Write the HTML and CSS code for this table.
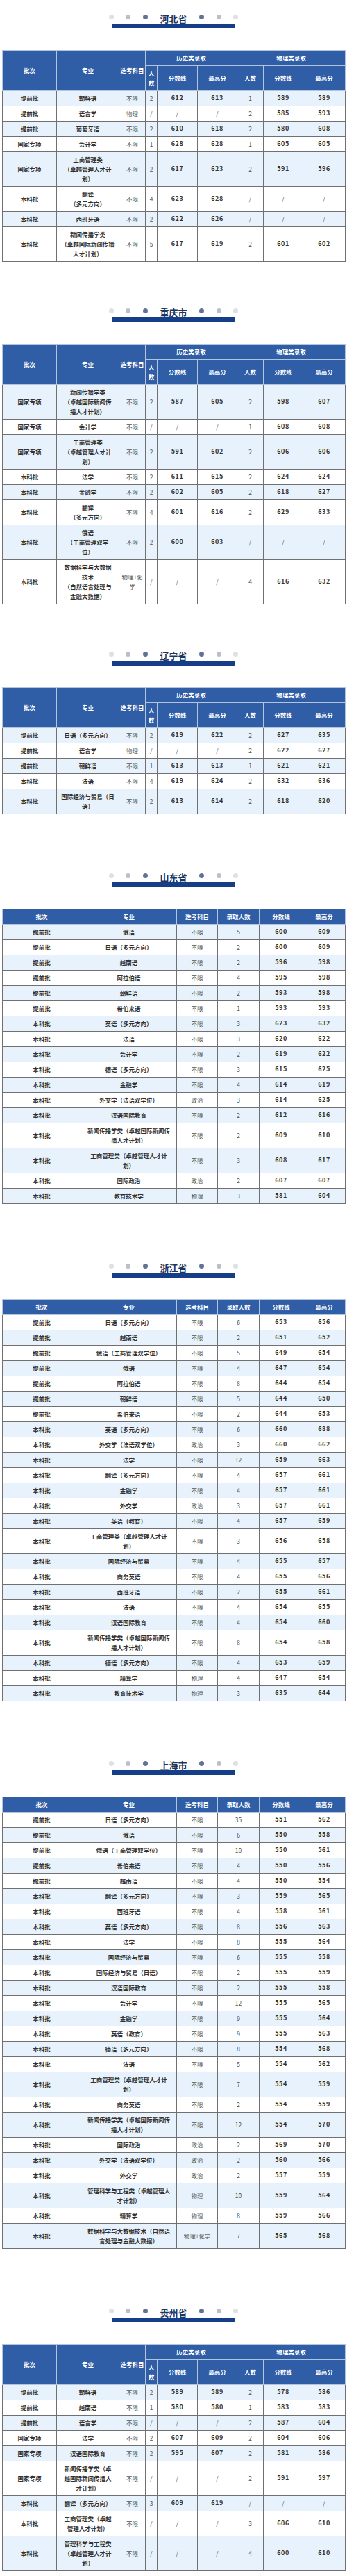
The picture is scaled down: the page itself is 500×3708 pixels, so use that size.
FILE: index.html
```html
<!DOCTYPE html>
<html lang="zh-CN">
<head>
<meta charset="utf-8">
<title>各省录取分数线</title>
<link rel="stylesheet" href="styles.css">
</head>
<body>
<div class="page">

<section class="sec">
  <div class="head">
    <div class="title-row"><span class="dot d1"></span><span class="dot d2"></span><span class="dot d3"></span><span class="title">河北省</span><span class="dot d3"></span><span class="dot d2"></span><span class="dot d1"></span></div>
    <div class="bar"></div>
  </div>
  <table class="t9">
    <colgroup><col class="w78"><col class="w90"><col class="w38"><col class="w17"><col class="w58"><col class="w57"><col class="w38"><col class="w57"><col class="w61"></colgroup>
    <thead>
      <tr><th rowspan="2">批次</th><th rowspan="2">专业</th><th rowspan="2">选考科目</th><th colspan="3">历史类录取</th><th colspan="3">物理类录取</th></tr>
      <tr class="h2"><th>人<br>数</th><th>分数线</th><th>最高分</th><th>人数</th><th>分数线</th><th>最高分</th></tr>
    </thead>
    <tbody class="odd-blue">
      <tr><td class="b">提前批</td><td class="b">朝鲜语</td><td>不限</td><td>2</td><td class="s">612</td><td class="s">613</td><td>1</td><td class="s">589</td><td class="s">589</td></tr>
      <tr><td class="b">提前批</td><td class="b">语言学</td><td>物理</td><td>/</td><td>/</td><td>/</td><td>2</td><td class="s">585</td><td class="s">593</td></tr>
      <tr><td class="b">提前批</td><td class="b">葡萄牙语</td><td>不限</td><td>2</td><td class="s">610</td><td class="s">618</td><td>2</td><td class="s">580</td><td class="s">608</td></tr>
      <tr><td class="b">国家专项</td><td class="b">会计学</td><td>不限</td><td>1</td><td class="s">628</td><td class="s">628</td><td>1</td><td class="s">605</td><td class="s">605</td></tr>
      <tr><td class="b">国家专项</td><td class="b">工商管理类<br>（卓越管理人才计<br>划）</td><td>不限</td><td>2</td><td class="s">617</td><td class="s">623</td><td>2</td><td class="s">591</td><td class="s">596</td></tr>
      <tr><td class="b">本科批</td><td class="b">翻译<br>（多元方向）</td><td>不限</td><td>4</td><td class="s">623</td><td class="s">628</td><td>/</td><td>/</td><td>/</td></tr>
      <tr><td class="b">本科批</td><td class="b">西班牙语</td><td>不限</td><td>2</td><td class="s">622</td><td class="s">626</td><td>/</td><td>/</td><td>/</td></tr>
      <tr><td class="b">本科批</td><td class="b">新闻传播学类<br>（卓越国际新闻传播<br>人才计划）</td><td>不限</td><td>5</td><td class="s">617</td><td class="s">619</td><td>2</td><td class="s">601</td><td class="s">602</td></tr>
    </tbody>
  </table>
</section>

<section class="sec g66">
  <div class="head">
    <div class="title-row"><span class="dot d1"></span><span class="dot d2"></span><span class="dot d3"></span><span class="title">重庆市</span><span class="dot d3"></span><span class="dot d2"></span><span class="dot d1"></span></div>
    <div class="bar"></div>
  </div>
  <table class="t9">
    <colgroup><col class="w78"><col class="w90"><col class="w38"><col class="w17"><col class="w58"><col class="w57"><col class="w38"><col class="w57"><col class="w61"></colgroup>
    <thead>
      <tr><th rowspan="2">批次</th><th rowspan="2">专业</th><th rowspan="2">选考科目</th><th colspan="3">历史类录取</th><th colspan="3">物理类录取</th></tr>
      <tr class="h2"><th>人<br>数</th><th>分数线</th><th>最高分</th><th>人数</th><th>分数线</th><th>最高分</th></tr>
    </thead>
    <tbody class="odd-blue">
      <tr><td class="b">国家专项</td><td class="b">新闻传播学类<br>（卓越国际新闻传<br>播人才计划）</td><td>不限</td><td>2</td><td class="s">587</td><td class="s">605</td><td>2</td><td class="s">598</td><td class="s">607</td></tr>
      <tr><td class="b">国家专项</td><td class="b">会计学</td><td>不限</td><td>/</td><td>/</td><td>/</td><td>1</td><td class="s">608</td><td class="s">608</td></tr>
      <tr><td class="b">国家专项</td><td class="b">工商管理类<br>（卓越管理人才计<br>划）</td><td>不限</td><td>2</td><td class="s">591</td><td class="s">602</td><td>2</td><td class="s">606</td><td class="s">606</td></tr>
      <tr><td class="b">本科批</td><td class="b">法学</td><td>不限</td><td>2</td><td class="s">611</td><td class="s">615</td><td>2</td><td class="s">624</td><td class="s">624</td></tr>
      <tr><td class="b">本科批</td><td class="b">金融学</td><td>不限</td><td>2</td><td class="s">602</td><td class="s">605</td><td>2</td><td class="s">618</td><td class="s">627</td></tr>
      <tr><td class="b">本科批</td><td class="b">翻译<br>（多元方向）</td><td>不限</td><td>4</td><td class="s">601</td><td class="s">616</td><td>2</td><td class="s">629</td><td class="s">633</td></tr>
      <tr><td class="b">本科批</td><td class="b">俄语<br>（工商管理双学<br>位）</td><td>不限</td><td>2</td><td class="s">600</td><td class="s">603</td><td>/</td><td>/</td><td>/</td></tr>
      <tr><td class="b">本科批</td><td class="b">数据科学与大数据<br>技术<br>（自然语言处理与<br>金融大数据）</td><td>物理+化<br>学</td><td>/</td><td>/</td><td>/</td><td>4</td><td class="s">616</td><td class="s">632</td></tr>
    </tbody>
  </table>
</section>

<section class="sec g67">
  <div class="head">
    <div class="title-row"><span class="dot d1"></span><span class="dot d2"></span><span class="dot d3"></span><span class="title">辽宁省</span><span class="dot d3"></span><span class="dot d2"></span><span class="dot d1"></span></div>
    <div class="bar"></div>
  </div>
  <table class="t9">
    <colgroup><col class="w78"><col class="w90"><col class="w38"><col class="w17"><col class="w58"><col class="w57"><col class="w38"><col class="w57"><col class="w61"></colgroup>
    <thead>
      <tr><th rowspan="2">批次</th><th rowspan="2">专业</th><th rowspan="2">选考科目</th><th colspan="3">历史类录取</th><th colspan="3">物理类录取</th></tr>
      <tr class="h2"><th>人<br>数</th><th>分数线</th><th>最高分</th><th>人数</th><th>分数线</th><th>最高分</th></tr>
    </thead>
    <tbody class="odd-blue">
      <tr><td class="b">提前批</td><td class="b">日语（多元方向）</td><td>不限</td><td>2</td><td class="s">619</td><td class="s">622</td><td>2</td><td class="s">627</td><td class="s">635</td></tr>
      <tr><td class="b">提前批</td><td class="b">语言学</td><td>物理</td><td>/</td><td>/</td><td>/</td><td>2</td><td class="s">622</td><td class="s">627</td></tr>
      <tr><td class="b">提前批</td><td class="b">朝鲜语</td><td>不限</td><td>1</td><td class="s">613</td><td class="s">613</td><td>1</td><td class="s">621</td><td class="s">621</td></tr>
      <tr><td class="b">本科批</td><td class="b">法语</td><td>不限</td><td>4</td><td class="s">619</td><td class="s">624</td><td>2</td><td class="s">632</td><td class="s">636</td></tr>
      <tr><td class="b">本科批</td><td class="b">国际经济与贸易（日<br>语）</td><td>不限</td><td>2</td><td class="s">613</td><td class="s">614</td><td>2</td><td class="s">618</td><td class="s">620</td></tr>
    </tbody>
  </table>
</section>

<section class="sec g84">
  <div class="head">
    <div class="title-row"><span class="dot d1"></span><span class="dot d2"></span><span class="dot d3"></span><span class="title">山东省</span><span class="dot d3"></span><span class="dot d2"></span><span class="dot d1"></span></div>
    <div class="bar"></div>
  </div>
  <table class="t6">
    <colgroup><col class="w113"><col class="w138"><col class="w59"><col class="w60"><col class="w63"><col class="w61"></colgroup>
    <thead>
      <tr><th>批次</th><th>专业</th><th>选考科目</th><th>录取人数</th><th>分数线</th><th>最高分</th></tr>
    </thead>
    <tbody class="odd-blue">
      <tr><td class="b">提前批</td><td class="b">俄语</td><td>不限</td><td>5</td><td class="s">600</td><td class="s">609</td></tr>
      <tr><td class="b">提前批</td><td class="b">日语（多元方向）</td><td>不限</td><td>2</td><td class="s">600</td><td class="s">609</td></tr>
      <tr><td class="b">提前批</td><td class="b">越南语</td><td>不限</td><td>2</td><td class="s">596</td><td class="s">598</td></tr>
      <tr><td class="b">提前批</td><td class="b">阿拉伯语</td><td>不限</td><td>4</td><td class="s">595</td><td class="s">598</td></tr>
      <tr><td class="b">提前批</td><td class="b">朝鲜语</td><td>不限</td><td>2</td><td class="s">593</td><td class="s">598</td></tr>
      <tr><td class="b">提前批</td><td class="b">希伯来语</td><td>不限</td><td>1</td><td class="s">593</td><td class="s">593</td></tr>
      <tr><td class="b">本科批</td><td class="b">英语（多元方向）</td><td>不限</td><td>3</td><td class="s">623</td><td class="s">632</td></tr>
      <tr><td class="b">本科批</td><td class="b">法语</td><td>不限</td><td>3</td><td class="s">620</td><td class="s">622</td></tr>
      <tr><td class="b">本科批</td><td class="b">会计学</td><td>不限</td><td>2</td><td class="s">619</td><td class="s">622</td></tr>
      <tr><td class="b">本科批</td><td class="b">德语（多元方向）</td><td>不限</td><td>3</td><td class="s">615</td><td class="s">625</td></tr>
      <tr><td class="b">本科批</td><td class="b">金融学</td><td>不限</td><td>4</td><td class="s">614</td><td class="s">619</td></tr>
      <tr><td class="b">本科批</td><td class="b">外交学（法语双学位）</td><td>政治</td><td>3</td><td class="s">614</td><td class="s">625</td></tr>
      <tr><td class="b">本科批</td><td class="b">汉语国际教育</td><td>不限</td><td>2</td><td class="s">612</td><td class="s">616</td></tr>
      <tr><td class="b">本科批</td><td class="b">新闻传播学类（卓越国际新闻传<br>播人才计划）</td><td>不限</td><td>2</td><td class="s">609</td><td class="s">610</td></tr>
      <tr><td class="b">本科批</td><td class="b">工商管理类（卓越管理人才计<br>划）</td><td>不限</td><td>3</td><td class="s">608</td><td class="s">617</td></tr>
      <tr><td class="b">本科批</td><td class="b">国际政治</td><td>政治</td><td>2</td><td class="s">607</td><td class="s">607</td></tr>
      <tr><td class="b">本科批</td><td class="b">教育技术学</td><td>物理</td><td>3</td><td class="s">581</td><td class="s">604</td></tr>
    </tbody>
  </table>
</section>

<section class="sec g85">
  <div class="head">
    <div class="title-row"><span class="dot d1"></span><span class="dot d2"></span><span class="dot d3"></span><span class="title">浙江省</span><span class="dot d3"></span><span class="dot d2"></span><span class="dot d1"></span></div>
    <div class="bar"></div>
  </div>
  <table class="t6">
    <colgroup><col class="w113"><col class="w138"><col class="w59"><col class="w60"><col class="w63"><col class="w61"></colgroup>
    <thead>
      <tr><th>批次</th><th>专业</th><th>选考科目</th><th>录取人数</th><th>分数线</th><th>最高分</th></tr>
    </thead>
    <tbody class="even-blue">
      <tr><td class="b">提前批</td><td class="b">日语（多元方向）</td><td>不限</td><td>6</td><td class="s">653</td><td class="s">656</td></tr>
      <tr><td class="b">提前批</td><td class="b">越南语</td><td>不限</td><td>2</td><td class="s">651</td><td class="s">652</td></tr>
      <tr><td class="b">提前批</td><td class="b">俄语（工商管理双学位）</td><td>不限</td><td>5</td><td class="s">649</td><td class="s">654</td></tr>
      <tr><td class="b">提前批</td><td class="b">俄语</td><td>不限</td><td>4</td><td class="s">647</td><td class="s">654</td></tr>
      <tr><td class="b">提前批</td><td class="b">阿拉伯语</td><td>不限</td><td>8</td><td class="s">644</td><td class="s">654</td></tr>
      <tr><td class="b">提前批</td><td class="b">朝鲜语</td><td>不限</td><td>5</td><td class="s">644</td><td class="s">650</td></tr>
      <tr><td class="b">提前批</td><td class="b">希伯来语</td><td>不限</td><td>2</td><td class="s">644</td><td class="s">653</td></tr>
      <tr><td class="b">本科批</td><td class="b">英语（多元方向）</td><td>不限</td><td>6</td><td class="s">660</td><td class="s">688</td></tr>
      <tr><td class="b">本科批</td><td class="b">外交学（法语双学位）</td><td>政治</td><td>3</td><td class="s">660</td><td class="s">662</td></tr>
      <tr><td class="b">本科批</td><td class="b">法学</td><td>不限</td><td>12</td><td class="s">659</td><td class="s">663</td></tr>
      <tr><td class="b">本科批</td><td class="b">翻译（多元方向）</td><td>不限</td><td>4</td><td class="s">657</td><td class="s">661</td></tr>
      <tr><td class="b">本科批</td><td class="b">金融学</td><td>不限</td><td>4</td><td class="s">657</td><td class="s">661</td></tr>
      <tr><td class="b">本科批</td><td class="b">外交学</td><td>政治</td><td>3</td><td class="s">657</td><td class="s">661</td></tr>
      <tr><td class="b">本科批</td><td class="b">英语（教育）</td><td>不限</td><td>4</td><td class="s">657</td><td class="s">659</td></tr>
      <tr><td class="b">本科批</td><td class="b">工商管理类（卓越管理人才计<br>划）</td><td>不限</td><td>3</td><td class="s">656</td><td class="s">658</td></tr>
      <tr><td class="b">本科批</td><td class="b">国际经济与贸易</td><td>不限</td><td>4</td><td class="s">655</td><td class="s">657</td></tr>
      <tr><td class="b">本科批</td><td class="b">商务英语</td><td>不限</td><td>4</td><td class="s">655</td><td class="s">656</td></tr>
      <tr><td class="b">本科批</td><td class="b">西班牙语</td><td>不限</td><td>2</td><td class="s">655</td><td class="s">661</td></tr>
      <tr><td class="b">本科批</td><td class="b">法语</td><td>不限</td><td>4</td><td class="s">654</td><td class="s">655</td></tr>
      <tr><td class="b">本科批</td><td class="b">汉语国际教育</td><td>不限</td><td>4</td><td class="s">654</td><td class="s">660</td></tr>
      <tr><td class="b">本科批</td><td class="b">新闻传播学类（卓越国际新闻传<br>播人才计划）</td><td>不限</td><td>8</td><td class="s">654</td><td class="s">658</td></tr>
      <tr><td class="b">本科批</td><td class="b">德语（多元方向）</td><td>不限</td><td>4</td><td class="s">653</td><td class="s">659</td></tr>
      <tr><td class="b">本科批</td><td class="b">精算学</td><td>物理</td><td>4</td><td class="s">647</td><td class="s">654</td></tr>
      <tr><td class="b">本科批</td><td class="b">教育技术学</td><td>物理</td><td>3</td><td class="s">635</td><td class="s">644</td></tr>
    </tbody>
  </table>
</section>

<section class="sec g85">
  <div class="head">
    <div class="title-row"><span class="dot d1"></span><span class="dot d2"></span><span class="dot d3"></span><span class="title">上海市</span><span class="dot d3"></span><span class="dot d2"></span><span class="dot d1"></span></div>
    <div class="bar"></div>
  </div>
  <table class="t6">
    <colgroup><col class="w113"><col class="w138"><col class="w59"><col class="w60"><col class="w63"><col class="w61"></colgroup>
    <thead>
      <tr><th>批次</th><th>专业</th><th>选考科目</th><th>录取人数</th><th>分数线</th><th>最高分</th></tr>
    </thead>
    <tbody class="even-blue">
      <tr><td class="b">提前批</td><td class="b">日语（多元方向）</td><td>不限</td><td>35</td><td class="s">551</td><td class="s">562</td></tr>
      <tr><td class="b">提前批</td><td class="b">俄语</td><td>不限</td><td>6</td><td class="s">550</td><td class="s">558</td></tr>
      <tr><td class="b">提前批</td><td class="b">俄语（工商管理双学位）</td><td>不限</td><td>10</td><td class="s">550</td><td class="s">561</td></tr>
      <tr><td class="b">提前批</td><td class="b">希伯来语</td><td>不限</td><td>4</td><td class="s">550</td><td class="s">556</td></tr>
      <tr><td class="b">提前批</td><td class="b">越南语</td><td>不限</td><td>4</td><td class="s">550</td><td class="s">554</td></tr>
      <tr><td class="b">本科批</td><td class="b">翻译（多元方向）</td><td>不限</td><td>3</td><td class="s">559</td><td class="s">565</td></tr>
      <tr><td class="b">本科批</td><td class="b">西班牙语</td><td>不限</td><td>4</td><td class="s">558</td><td class="s">561</td></tr>
      <tr><td class="b">本科批</td><td class="b">英语（多元方向）</td><td>不限</td><td>8</td><td class="s">556</td><td class="s">563</td></tr>
      <tr><td class="b">本科批</td><td class="b">法学</td><td>不限</td><td>8</td><td class="s">555</td><td class="s">564</td></tr>
      <tr><td class="b">本科批</td><td class="b">国际经济与贸易</td><td>不限</td><td>6</td><td class="s">555</td><td class="s">558</td></tr>
      <tr><td class="b">本科批</td><td class="b">国际经济与贸易（日语）</td><td>不限</td><td>2</td><td class="s">555</td><td class="s">559</td></tr>
      <tr><td class="b">本科批</td><td class="b">汉语国际教育</td><td>不限</td><td>2</td><td class="s">555</td><td class="s">558</td></tr>
      <tr><td class="b">本科批</td><td class="b">会计学</td><td>不限</td><td>12</td><td class="s">555</td><td class="s">565</td></tr>
      <tr><td class="b">本科批</td><td class="b">金融学</td><td>不限</td><td>9</td><td class="s">555</td><td class="s">564</td></tr>
      <tr><td class="b">本科批</td><td class="b">英语（教育）</td><td>不限</td><td>9</td><td class="s">555</td><td class="s">563</td></tr>
      <tr><td class="b">本科批</td><td class="b">德语（多元方向）</td><td>不限</td><td>8</td><td class="s">554</td><td class="s">568</td></tr>
      <tr><td class="b">本科批</td><td class="b">法语</td><td>不限</td><td>5</td><td class="s">554</td><td class="s">562</td></tr>
      <tr><td class="b">本科批</td><td class="b">工商管理类（卓越管理人才计<br>划）</td><td>不限</td><td>7</td><td class="s">554</td><td class="s">559</td></tr>
      <tr><td class="b">本科批</td><td class="b">商务英语</td><td>不限</td><td>2</td><td class="s">554</td><td class="s">559</td></tr>
      <tr><td class="b">本科批</td><td class="b">新闻传播学类（卓越国际新闻传<br>播人才计划）</td><td>不限</td><td>12</td><td class="s">554</td><td class="s">570</td></tr>
      <tr><td class="b">本科批</td><td class="b">国际政治</td><td>政治</td><td>2</td><td class="s">569</td><td class="s">570</td></tr>
      <tr><td class="b">本科批</td><td class="b">外交学（法语双学位）</td><td>政治</td><td>2</td><td class="s">560</td><td class="s">566</td></tr>
      <tr><td class="b">本科批</td><td class="b">外交学</td><td>政治</td><td>2</td><td class="s">557</td><td class="s">559</td></tr>
      <tr><td class="b">本科批</td><td class="b">管理科学与工程类（卓越管理人<br>才计划）</td><td>物理</td><td>10</td><td class="s">559</td><td class="s">564</td></tr>
      <tr><td class="b">本科批</td><td class="b">精算学</td><td>物理</td><td>8</td><td class="s">559</td><td class="s">566</td></tr>
      <tr><td class="b">本科批</td><td class="b">数据科学与大数据技术（自然语<br>言处理与金融大数据）</td><td>物理+化学</td><td>7</td><td class="s">565</td><td class="s">568</td></tr>
    </tbody>
  </table>
</section>

<section class="sec g85">
  <div class="head">
    <div class="title-row"><span class="dot d1"></span><span class="dot d2"></span><span class="dot d3"></span><span class="title">贵州省</span><span class="dot d3"></span><span class="dot d2"></span><span class="dot d1"></span></div>
    <div class="bar"></div>
  </div>
  <table class="t9">
    <colgroup><col class="w78"><col class="w90"><col class="w38"><col class="w17"><col class="w58"><col class="w57"><col class="w38"><col class="w57"><col class="w61"></colgroup>
    <thead>
      <tr><th rowspan="2">批次</th><th rowspan="2">专业</th><th rowspan="2">选考科目</th><th colspan="3">历史类录取</th><th colspan="3">物理类录取</th></tr>
      <tr class="h2"><th>人<br>数</th><th>分数线</th><th>最高分</th><th>人数</th><th>分数线</th><th>最高分</th></tr>
    </thead>
    <tbody class="odd-blue">
      <tr><td class="b">提前批</td><td class="b">朝鲜语</td><td>不限</td><td>2</td><td class="s">589</td><td class="s">589</td><td>2</td><td class="s">578</td><td class="s">586</td></tr>
      <tr><td class="b">提前批</td><td class="b">越南语</td><td>不限</td><td>1</td><td class="s">580</td><td class="s">580</td><td>1</td><td class="s">583</td><td class="s">583</td></tr>
      <tr><td class="b">提前批</td><td class="b">语言学</td><td>不限</td><td>/</td><td>/</td><td>/</td><td>2</td><td class="s">587</td><td class="s">604</td></tr>
      <tr><td class="b">国家专项</td><td class="b">法学</td><td>不限</td><td>2</td><td class="s">607</td><td class="s">609</td><td>2</td><td class="s">604</td><td class="s">606</td></tr>
      <tr><td class="b">国家专项</td><td class="b">汉语国际教育</td><td>不限</td><td>2</td><td class="s">595</td><td class="s">607</td><td>2</td><td class="s">581</td><td class="s">586</td></tr>
      <tr><td class="b">国家专项</td><td class="b">新闻传播学类（卓<br>越国际新闻传播人<br>才计划）</td><td>不限</td><td>/</td><td>/</td><td>/</td><td>2</td><td class="s">591</td><td class="s">597</td></tr>
      <tr><td class="b">本科批</td><td class="b">翻译（多元方向）</td><td>不限</td><td>3</td><td class="s">609</td><td class="s">619</td><td>/</td><td>/</td><td>/</td></tr>
      <tr><td class="b">本科批</td><td class="b">工商管理类（卓越<br>管理人才计划）</td><td>不限</td><td>/</td><td>/</td><td>/</td><td>3</td><td class="s">606</td><td class="s">610</td></tr>
      <tr><td class="b">本科批</td><td class="b">管理科学与工程类<br>（卓越管理人才计<br>划）</td><td>不限</td><td>/</td><td>/</td><td>/</td><td>4</td><td class="s">600</td><td class="s">610</td></tr>
    </tbody>
  </table>
</section>

</div>
</body>
</html>
```

FILE: styles.css
```css
html, body {
  margin: 0;
  padding: 0;
  background: #ffffff;
}

body {
  width: 500px;
  font-family: "Noto Sans CJK SC", "Noto Sans", sans-serif;
  color: #333333;
}

.page {
  padding: 20px 3px 6px;
}

.g66 { margin-top: 66px; }
.g67 { margin-top: 67px; }
.g84 { margin-top: 84px; }
.g85 { margin-top: 85px; }

.head {
  display: flex;
  flex-direction: column;
  align-items: center;
}

.title-row {
  display: flex;
  align-items: flex-start;
  gap: 17.5px;
  height: 14px;
}

.dot {
  width: 7px;
  height: 7px;
  border-radius: 50%;
  margin-top: 0.5px;
  flex: none;
}

.d1 { background: #dde0e6; }
.d2 { background: #b9c0cc; }
.d3 { background: #5f7398; }

.title {
  font-size: 13px;
  line-height: 14px;
  height: 14px;
  font-weight: bold;
  color: #1c3560;
  white-space: nowrap;
}

.bar {
  width: 178px;
  height: 7px;
  background: #163d88;
}

table {
  width: 494px;
  margin-top: 31px;
  border-collapse: collapse;
  table-layout: fixed;
}

.w78 { width: 78px; }
.w90 { width: 90px; }
.w38 { width: 38px; }
.w17 { width: 17px; }
.w58 { width: 58px; }
.w57 { width: 57px; }
.w61 { width: 61px; }
.w113 { width: 113px; }
.w138 { width: 138px; }
.w59 { width: 59px; }
.w60 { width: 60px; }
.w63 { width: 63px; }

th, td {
  padding: 3px 0 4px;
  font-size: 8.5px;
  line-height: 14px;
  text-align: center;
  vertical-align: middle;
  white-space: nowrap;
  overflow: hidden;
}

th {
  background: #2f5da6;
  color: #ffffff;
  font-weight: bold;
  border: 1px solid #b3c4de;
}

td {
  border: 1px solid #707070;
  color: #555555;
  font-weight: normal;
}

td.b {
  color: #333333;
  font-weight: bold;
}

td.s {
  color: #333333;
  font-weight: bold;
  font-size: 9px;
  letter-spacing: 0.5px;
}

.odd-blue tr:nth-child(odd) td {
  background: #e7f2fc;
}

.even-blue tr:nth-child(even) td {
  background: #e7f2fc;
}
```
